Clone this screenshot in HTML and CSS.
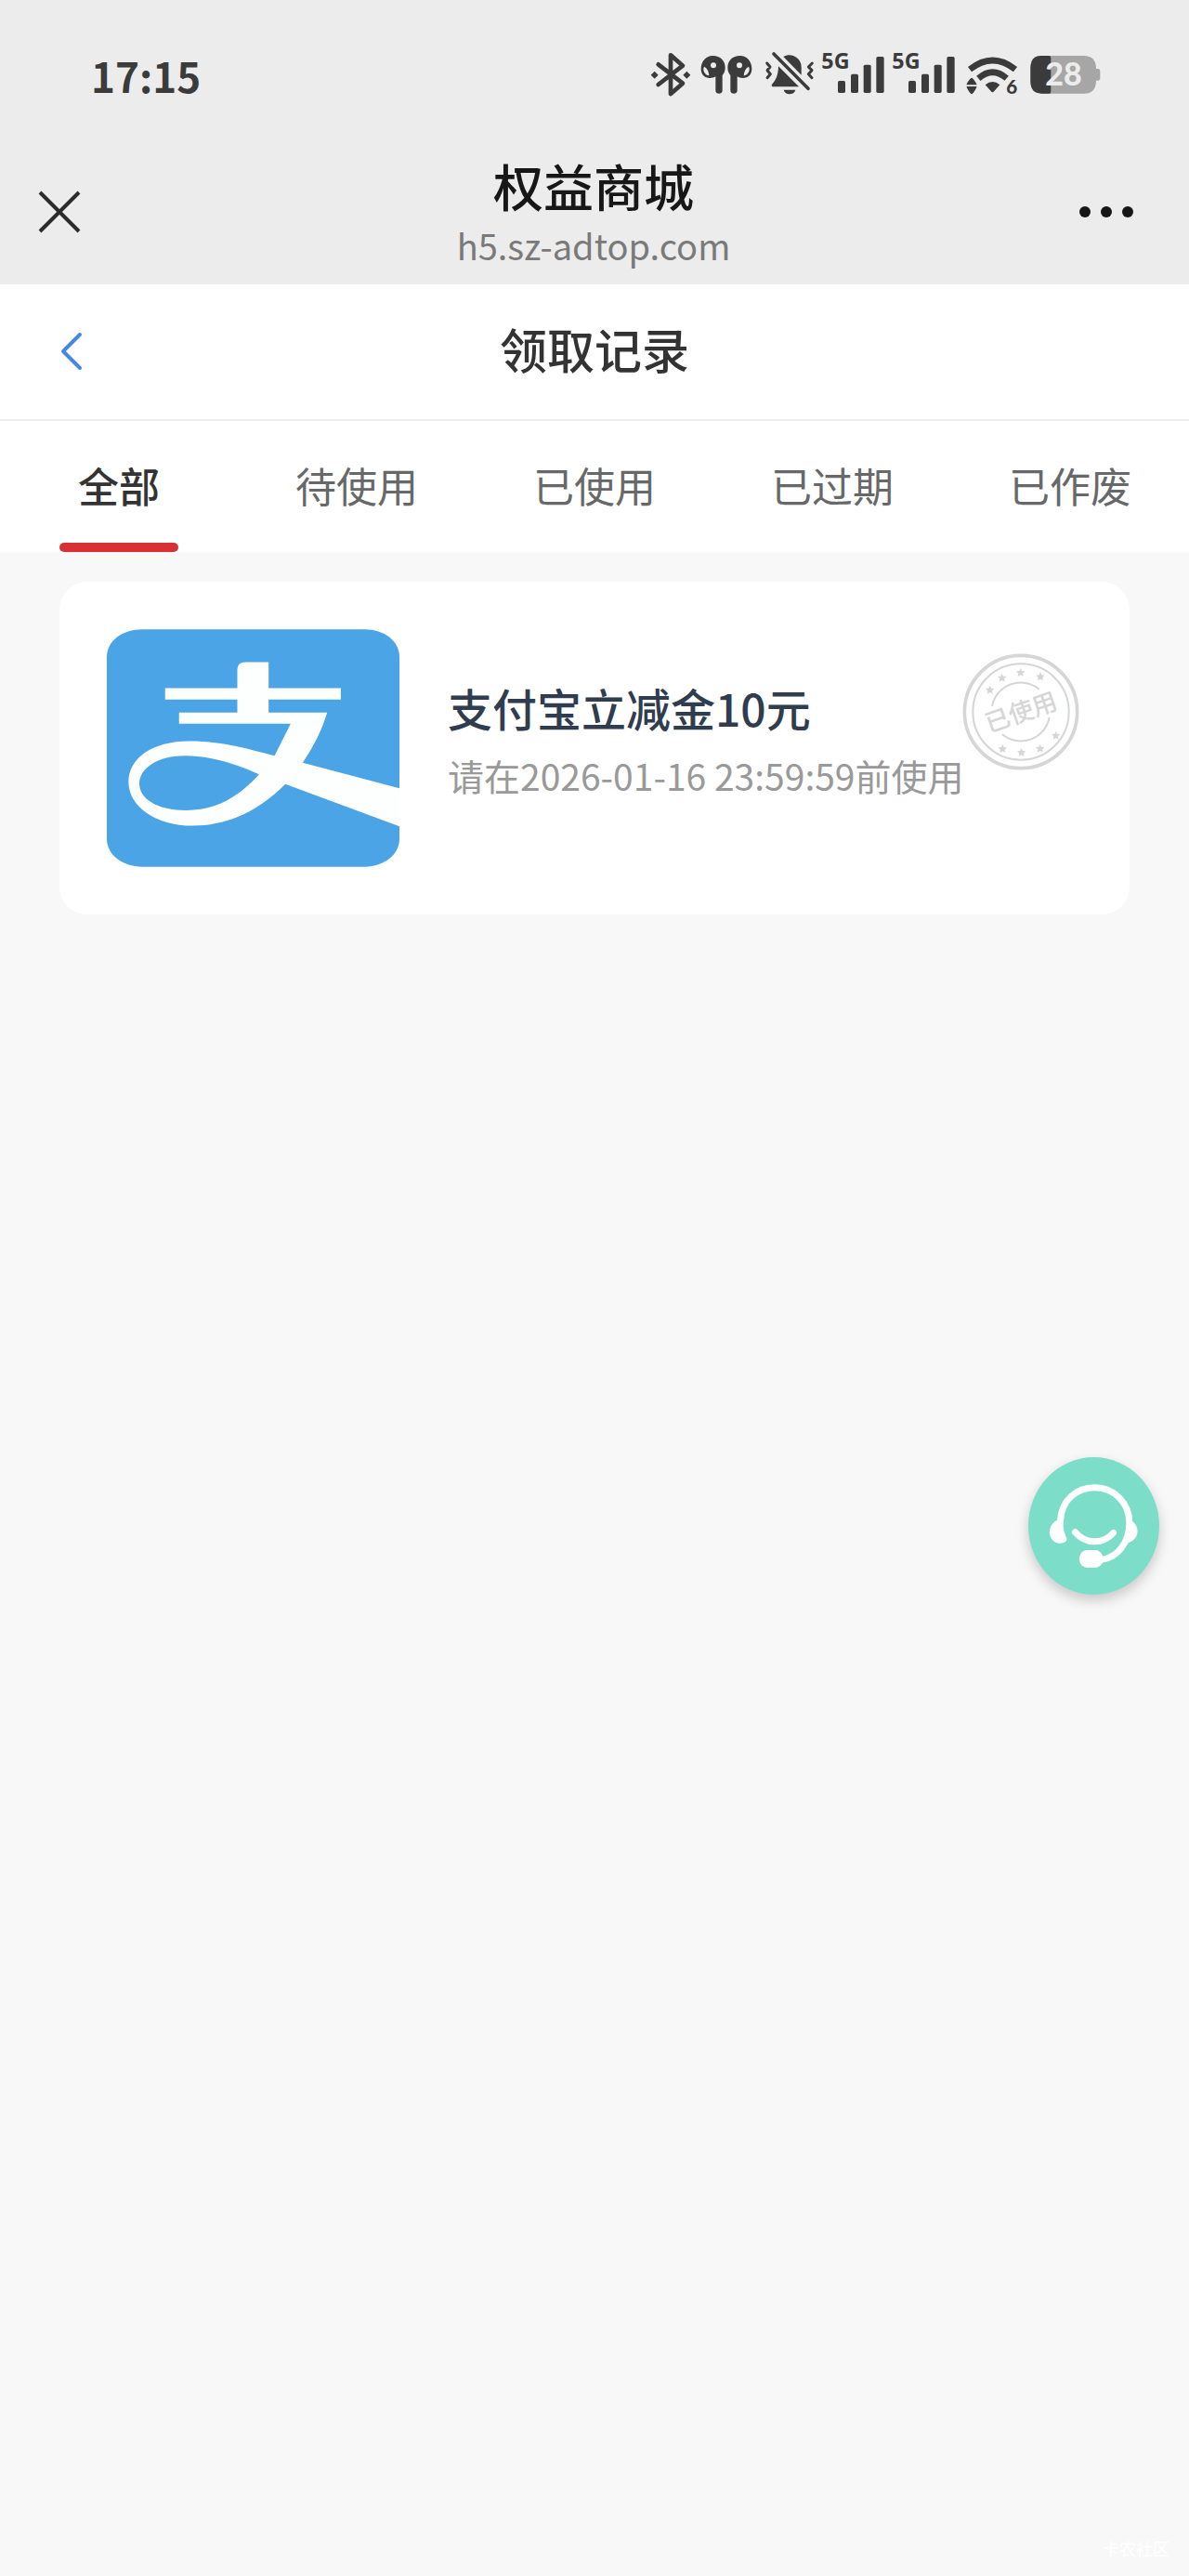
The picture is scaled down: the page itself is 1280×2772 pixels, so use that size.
FILE: index.html
```html
<!DOCTYPE html>
<html lang="zh-CN">
<head>
<meta charset="utf-8">
<meta name="viewport" content="width=device-width, initial-scale=1">
<title>领取记录</title>
<link rel="stylesheet" href="styles.css">
</head>
<body>
<div class="browser-bar">
  <div class="status">
    <time class="clock">17:15</time>
    <div class="status-icons">
      <svg class="w44" viewBox="60 12 132 189" aria-hidden="true">
        <path d="M86 88L165 149L126 183V58L165 92L86 153" fill="none" stroke="#3b3b3b" stroke-width="14" stroke-linejoin="round" stroke-linecap="round"/>
        <path d="M74 110l12 12-12 12-12-12zM178 110l12 12-12 12-12-12z" fill="#3b3b3b"/>
      </svg>
      <svg class="w56 after-bt" viewBox="222 12 168 189" aria-hidden="true">
        <g id="pod">
          <path d="M262 60c24 0 40 16 40 38 0 10-3 18-9 25v50c0 12-22 12-22 0v-46c-8 5-20 6-30 3-10-4-17-14-17-28 0-24 16-42 38-42z" fill="#3b3b3b"/>
          <circle cx="264" cy="91" r="9" fill="#ececec"/>
          <path d="M234 95c-6 12 2 27 16 29-1-14-6-24-16-29z" fill="#ececec"/>
        </g>
        <use href="#pod" transform="matrix(-1 0 0 1 612 0)"/>
      </svg>
      <svg class="w56 after-pods" viewBox="426 12 168 189" aria-hidden="true">
        <g fill="#3b3b3b">
          <path d="M490 63c26-15 58 4 58 34v25z"/>
          <path d="M474 94l66 66h-82c-7 0-7-6-3-10 16-18 18-36 19-56z"/>
          <path d="M491 170h38c-4 18-34 18-38 0z"/>
        </g>
        <path d="M459 54L570 166" stroke="#3b3b3b" stroke-width="11" stroke-linecap="round"/>
        <path d="M437 84l10 12-9 11 10 12-10 12M583 84l-12 12 11 11-11 12 11 12" fill="none" stroke="#3b3b3b" stroke-width="9" stroke-linejoin="round" stroke-linecap="round"/>
      </svg>
      <svg class="w70 after-bell" viewBox="612 12 210 189" role="img" aria-label="5G">
        <g id="signal">
          <text class="net" x="613" y="101">5G</text>
          <g fill="#3b3b3b">
            <rect x="666" y="141" width="24" height="39" rx="5"/>
            <rect x="708" y="119" width="24" height="61" rx="5"/>
            <rect x="749" y="89" width="24" height="91" rx="5"/>
            <rect x="790" y="63" width="25" height="117" rx="5"/>
          </g>
        </g>
      </svg>
      <svg class="w70 after-signal" viewBox="612 12 210 189" role="img" aria-label="5G">
        <use href="#signal"/>
      </svg>
      <svg class="w56 after-wifi" viewBox="300 12 168 189" role="img" aria-label="Wi-Fi 6">
        <path d="M312 104Q386 46 459 104M340 133Q386 94 431 133" fill="none" stroke="#3b3b3b" stroke-width="20"/>
        <path d="M362 154q24-20 47 0l-20 22q-4 3-7 0zM318 131q5 0 16 20v3h-32v-3q11-20 16-20zM318 184q-5 0-16-22v-3h32v3q-11 22-16 22z" fill="#3b3b3b"/>
        <text class="gen" x="430" y="184">6</text>
      </svg>
      <svg class="w78 after-battery" viewBox="504 12 234 189" role="img" aria-label="28%">
        <path d="M544 60H680q40 0 40 42h6q7 0 7 8v22q0 8-7 8h-6q0 42-40 42H544q-36 0-36-40V100q0-40 36-40z" fill="#a6a6a6"/>
        <path d="M544 60h24q6 0 6 6v110q0 6-6 6H544q-36 0-36-40V100q0-40 36-40z" fill="#3b3b3b"/>
        <text class="charge" x="556" y="157">28</text>
      </svg>
    </div>
  </div>
  <header class="web-nav">
    <button class="icon-btn" type="button" aria-label="关闭">
      <svg width="48" height="48" viewBox="0 0 48 48"><path d="M3 3L45 45M45 3L3 45" stroke="#2b2b2b" stroke-width="4"/></svg>
    </button>
    <div class="site">
      <div class="site-name">权益商城</div>
      <div class="site-url">h5.sz-adtop.com</div>
    </div>
    <button class="icon-btn more" type="button" aria-label="更多">
      <svg width="60" height="48" viewBox="0 0 60 48" fill="#171717"><circle cx="8" cy="24" r="6"/><circle cx="31" cy="24" r="6"/><circle cx="54" cy="24" r="6"/></svg>
    </button>
  </header>
</div>

<div class="page-head">
  <button class="icon-btn back" type="button" aria-label="返回">
    <svg width="28" height="44" viewBox="0 0 28 44"><path d="M24 4L6 22L24 40" fill="none" stroke="#4687e0" stroke-width="4" stroke-linecap="round" stroke-linejoin="round"/></svg>
  </button>
  <h1>领取记录</h1>
</div>

<nav class="tabs">
  <a class="tab active" href="#all" aria-current="page">全部</a>
  <a class="tab" href="#pending">待使用</a>
  <a class="tab" href="#used">已使用</a>
  <a class="tab" href="#expired">已过期</a>
  <a class="tab" href="#void">已作废</a>
</nav>

<main class="records">
  <article class="card">
    <svg class="logo" viewBox="76 83 944 765" role="img" aria-label="支付宝">
      <path d="M190 83H908C970 83 1020 120 1020 172V758C1020 810 970 848 908 848H190C126 848 76 810 76 758V172C76 120 126 83 190 83z" fill="#4aa4e6"/>
      <path fill="#fcfffe" fill-rule="evenodd" d="M497 272V212Q497 188 524 188H598V272H831V309H598V351H787Q764 430 708 513L1020 595V718L652 582C570 665 470 716 352 716C235 716 146 655 146 574C146 500 220 443 343 443C450 443 530 468 617 490L669 387H309V351H497V309H264V272zM567 550C480 510 400 490 330 490C240 490 181 530 181 580C181 630 240 666 332 666C430 666 500 624 567 550z"/>
    </svg>
    <div class="info">
      <h2>支付宝立减金10元</h2>
      <p>请在2026-01-16 23:59:59前使用</p>
    </div>
    <svg class="stamp" viewBox="78 69 378 378" role="img" aria-label="已使用">
      <g fill="none" stroke="#d6d6d6">
        <circle cx="267" cy="258" r="182" stroke-width="11"/>
        <circle cx="267" cy="258" r="155" stroke-width="6"/>
        <path d="M174 240A94 94 0 0 1 326 185M359 276A94 94 0 0 1 207 331" stroke-width="6"/>
      </g>
      <defs><path id="star" d="M0-13l4 9 10 1-7 7 2 10-9-5-9 5 2-10-7-7 10-1z" fill="#d6d6d6"/></defs>
      <use href="#star" x="167" y="186"/><use href="#star" x="206" y="147"/><use href="#star" x="266" y="130"/><use href="#star" x="330" y="143"/>
      <use href="#star" x="208" y="376"/><use href="#star" x="269" y="388"/><use href="#star" x="329" y="375"/><use href="#star" x="380" y="333"/>
      <text class="stamp-text" x="267" y="288" transform="rotate(-19 267 258)">已使用</text>
    </svg>
  </article>
</main>

<button class="service" type="button" aria-label="在线客服">
  <svg viewBox="80 83 425 445">
    <g fill="none" stroke="#fff" stroke-linecap="round">
      <path d="M194 348C178 318 184 290 184 288C188 222 236 181 296 181C360 181 408 232 408 296C408 360 370 408 318 415" stroke-width="21"/>
      <path d="M232 326C266 366 322 366 356 328" stroke-width="21"/>
    </g>
    <path fill="#fff" d="M176 286C140 300 140 352 176 361C190 364 204 360 204 348L184 290zM414 288C444 306 442 350 402 361z"/>
    <rect x="246" y="384" width="76" height="57" rx="25" fill="#fff"/>
  </svg>
</button>
<footer class="watermark">卡农社区</footer>
</body>
</html>
```
FILE: styles.css
```css
* { box-sizing: border-box; }

html { height: 100%; }

body {
  margin: 0;
  min-height: 100%;
  display: flex;
  flex-direction: column;
  background: #f8f8f8;
  color: #333;
  font-family: "Noto Sans CJK SC", sans-serif;
}

h1, h2, p { margin: 0; font-weight: 400; }

button {
  margin: 0;
  padding: 0;
  border: 0;
  background: none;
  cursor: pointer;
}

svg { display: block; }

/* System status and browser title */
.browser-bar { background: #ececec; padding-bottom: 14px; }

.status {
  display: flex;
  align-items: center;
  justify-content: space-between;
  padding: 44px 94px 0 98px;
}

.clock {
  color: #3b3b3b;
  font-size: 44px;
  font-weight: 700;
  line-height: 64px;
}

.status-icons { display: flex; padding-bottom: 10px; }
.status-icons svg { height: 63px; }
.w44 { width: 44px; }
.w56 { width: 56px; }
.w70 { width: 70px; }
.w78 { width: 78px; }
.after-bt, .after-wifi { margin-left: 10px; }
.after-pods, .after-battery { margin-left: 12px; }
.after-bell, .after-signal { margin-left: 6px; }
.net { font: 700 70px "Noto Sans", sans-serif; fill: #3b3b3b; }
.gen { font: 900 62px Lato, sans-serif; fill: #3b3b3b; }
.charge { font: 900 102px Lato, sans-serif; fill: #ececec; }

.web-nav {
  display: grid;
  grid-template-columns: 1fr auto 1fr;
  align-items: center;
  padding: 47px 60px 0 40px;
}

.icon-btn { display: block; justify-self: start; }
.more { justify-self: end; }
.site { text-align: center; margin-left: 18px; }
.site-name { color: #171717; font-size: 54px; font-weight: 500; line-height: 72px; }
.site-url { color: #7a7a7a; font-size: 38px; line-height: 56px; }

/* Page title */
.page-head {
  display: grid;
  grid-template-columns: 1fr auto 1fr;
  align-items: center;
  padding: 34px 62px 35px;
  background: #fff;
  border-bottom: 2px solid #eceff0;
}
.page-head h1 {
  padding-bottom: 6px;
  font-size: 51px;
  font-weight: 500;
  line-height: 70px;
}

/* Filter tabs */
.tabs {
  display: grid;
  grid-template-columns: repeat(5, 1fr);
  background: #fff;
}
.tab {
  display: flex;
  flex-direction: column;
  align-items: center;
  padding-top: 35px;
  color: #666869;
  font-size: 44px;
  line-height: 68px;
  text-decoration: none;
}
.tab::after {
  content: "";
  width: 50%;
  height: 10px;
  margin-top: 28px;
  border-radius: 5px;
}
.tab.active { color: #333; font-weight: 500; }
.tab.active::after { background: #d93133; }

/* Coupon records */
.records { padding: 32px 64px; }
.card {
  display: flex;
  align-items: flex-start;
  padding: 51px;
  border-radius: 30px;
  background: #fff;
}
.logo { width: 315px; height: 256px; flex: none; }
.info { flex: 1; margin-left: 52px; padding-top: 48px; white-space: nowrap; }
.info h2 { color: #303d4e; font-size: 48px; font-weight: 500; line-height: 72px; }
.info p { margin-top: 3px; color: #999; font-size: 39px; line-height: 68px; }
.stamp { width: 126px; height: 126px; flex: none; margin-top: 26px; margin-right: 3px; transform: none; }
.stamp-text { font-size: 80px; font-weight: 500; fill: #d6d6d6; text-anchor: middle; }

/* The expiry line may run under the stamp */
.info { min-width: 0; }

/* Floating customer service button */
.service {
  position: fixed;
  right: 32px;
  top: 1568px;
  width: 141px;
  height: 148px;
  border-radius: 50%;
  background: #7cdec9;
  box-shadow: 0 6px 14px rgba(0, 0, 0, 0.2);
}
.service svg { width: 100%; height: 100%; }

.watermark {
  margin-top: auto;
  padding: 0 21px 16px;
  color: #fff;
  font-size: 18px;
  line-height: 28px;
  text-align: right;
}
```
